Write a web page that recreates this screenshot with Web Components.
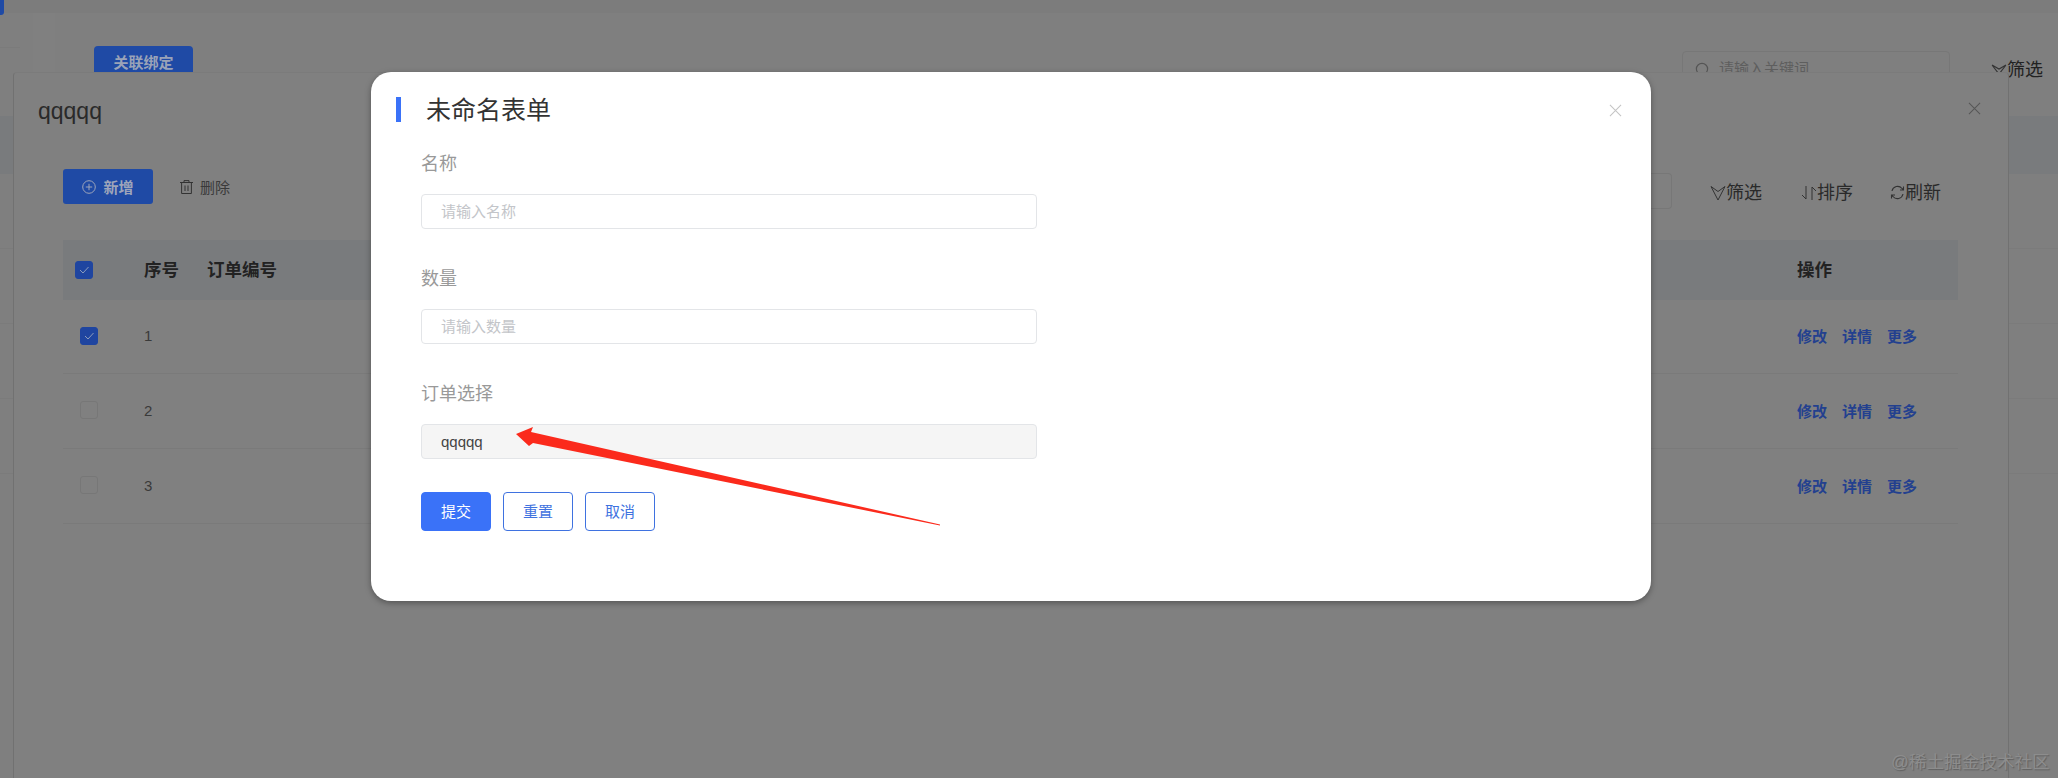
<!DOCTYPE html>
<html lang="zh"><head><meta charset="utf-8"><title>未命名表单</title>
<style>
html,body{margin:0;padding:0;background:#808080}
body{font-family:"Liberation Sans","Noto Sans CJK SC",sans-serif}
</style></head><body>
<x-stage>
  <x-back-page slot="back"></x-back-page>
  <x-drawer slot="drawer" heading="qqqqq">
    <x-data-table></x-data-table>
  </x-drawer>
  <x-modal slot="modal" heading="未命名表单">
    <x-field label="名称" placeholder="请输入名称"></x-field>
    <x-field label="数量" placeholder="请输入数量"></x-field>
    <x-field label="订单选择" value="qqqqq" disabled></x-field>
    <x-actions></x-actions>
  </x-modal>
  <x-arrow slot="overlay"></x-arrow>
  <x-watermark slot="overlay">@稀土掘金技术社区</x-watermark>
</x-stage>
<script>
const FONT='"Liberation Sans","Noto Sans CJK SC",sans-serif';
function def(name,html){
  customElements.define(name,class extends HTMLElement{
    constructor(){super();this.attachShadow({mode:'open'});}
    connectedCallback(){
      this.shadowRoot.innerHTML=typeof html==='function'?html(this):html;
    }
  });
}
const closeIcon=(s,c)=>`<svg width="${s}" height="${s}" viewBox="0 0 14 14" fill="none" stroke="${c}" stroke-width="1.1"><path d="M1 1l12 12M13 1L1 13"/></svg>`;
const check=`<svg width="16" height="16" viewBox="0 0 16 16" fill="none" stroke="#8c9cbc" stroke-width="1"><path d="M4 8l3 3 5.500-6"/></svg>`;
const ops=`<div class="o"><span>修改</span><span>详情</span><span>更多</span></div>`;

def('x-stage',`<style>
:host{display:block;position:relative;width:2058px;height:778px;overflow:hidden;background:#808080;font-family:${FONT}}
</style><slot name="back"></slot><slot name="drawer"></slot><slot name="modal"></slot><slot name="overlay"></slot>`);

def('x-back-page',`<style>
:host{position:absolute;inset:0;display:flex;flex-direction:column;background:#7f7f7f}
.top{height:13px;background:#7c7c7c;flex:none}
.tab{position:absolute;left:0;top:0;width:4px;height:15px;background:#1f4aa5;border-radius:0 0 3px 0}
.side{position:absolute;left:0;top:47px;width:20px;height:1px;background:#7b7b7b}
.strip{position:absolute;left:33px;top:13px;width:22px;height:59px;background:#808080}
.bar{height:103px;flex:none;box-sizing:border-box;padding:33px 15px 0 94px;display:flex;align-items:flex-start;justify-content:space-between;position:relative}
.btn{width:99px;height:40px;background:#1f4aa5;border-radius:4px 4px 0 0;color:#9aa3b8;font-size:15px;font-weight:700;text-align:center;line-height:34px}
.r{display:flex;align-items:flex-start}
.search{width:268px;height:34px;box-sizing:border-box;border:1px solid #777;border-radius:4px;padding:4px 12px;display:flex;gap:10px;color:#5e5e5e;font-size:15px;line-height:26px;overflow:hidden;margin-top:5px}
.search svg{margin-top:6px;flex:none}
.fil{margin-left:41px;margin-top:10px;display:flex;align-items:center;font-size:18px;color:#222;line-height:28px}
.band{height:58px;flex:none;background:#797b7d}
.row{height:75px;flex:none;box-sizing:border-box;border-bottom:1px solid #7b7b7b}
</style>
<span class="strip"></span><span class="tab"></span><span class="side"></span>
<div class="top"></div>
<div class="bar"><div class="btn">关联绑定</div><div class="r"><div class="search"><svg width="14" height="14" viewBox="0 0 14 14" fill="none" stroke="#555" stroke-width="1.2"><circle cx="7" cy="7" r="5.6"/></svg><span>请输入关键词</span></div>
<div class="fil"><svg width="16" height="12" viewBox="0 0 16 12" fill="none" stroke="#333" stroke-width="1.1"><path d="M1 1l7 9 7-9M1 1l7 4 7-4"/></svg>筛选</div></div></div>
<div class="band"></div><div class="row"></div><div class="row"></div><div class="row"></div><div class="row"></div>`);

def('x-drawer',h=>`<style>
:host{position:absolute;left:13px;top:72px;width:1996px;bottom:0;box-sizing:border-box;background:#808080;border-left:1px solid #717171;border-right:1px solid #717171;border-top:1px solid #7b7b7b;border-radius:4px 4px 0 0;display:block;padding:0 50px 0 49px}
header{height:96px;display:flex;justify-content:space-between;margin-left:-25px;margin-right:-23px;box-sizing:border-box}
h2{margin:0;font-size:23px;font-weight:400;color:#2a2a2a;line-height:26px;padding-top:25px}
.x{padding-top:28px}
</style>
<header><h2>${h.getAttribute('heading')}</h2><div class="x">${closeIcon(13,'#565656')}</div></header>
<slot></slot>`);

def('x-data-table',`<style>
:host{display:block;color:#222;font-size:17.5px}
.tools{height:35px;display:flex;align-items:center;margin-bottom:36px}
.add{width:90px;height:35px;box-sizing:border-box;background:#1f4aa5;border-radius:3px;color:#9ea5ba;font-size:15px;font-weight:700;display:flex;align-items:center;justify-content:center;gap:7px}
.del{margin-left:27px;display:flex;align-items:center;gap:7px;font-size:15px;color:#3a3a3a}
.right{margin-left:auto;margin-right:17px;margin-top:12px;display:flex;align-items:center;font-size:18px;color:#2a2a2a}
.q{width:110px;height:36px;box-sizing:border-box;border:1px solid #777;border-left:0;border-radius:0 4px 4px 0;margin-right:38px;margin-top:-4px}
.t{display:flex;align-items:center;gap:0;line-height:26px}
.t+.t{margin-left:37px}
.t:nth-child(3){margin-left:39px}
.g{display:grid;grid-template-columns:81px 63px 1fr 161px;align-items:center;box-sizing:border-box}
.h{height:60px;background:#797b7d;font-weight:700}
.h span{padding-bottom:3px}
.b{height:75px;border-bottom:1px solid #7a7a7a;font-size:15px;color:#3a3a3a;padding-bottom:2px}
.h+.b{height:74px}
.c{display:block;width:18px;height:18px;box-sizing:border-box;border:1px solid #777;border-radius:3px}
.on{background:#1f45a0;border-color:#1f45a0}
.on svg{display:block}
.h .c{margin-left:12px}.b .c{margin-left:17px}
.o{display:flex;gap:15px;color:#23408f;font-weight:700;font-size:15px}
</style>
<div class="tools">
<div class="add"><svg width="14" height="14" viewBox="0 0 14 14" fill="none" stroke="#9ea5ba" stroke-width="1"><circle cx="7" cy="7" r="6.3"/><path d="M7 3.800v6.400M3.800 7h6.400"/></svg>新增</div>
<div class="del"><svg width="13" height="14" viewBox="0 0 13 14" fill="none" stroke="#333" stroke-width="1"><path d="M0 2.500h13M4 2.500V.6h5v1.900M1.600 2.500v11h9.800v-11M5 5.500v5.500M8 5.500v5.500"/></svg>删除</div>
<div class="right"><div class="q"></div>
<div class="t"><svg width="16" height="16" viewBox="0 0 16 16" fill="none" stroke="#333" stroke-width="1"><path d="M1 1.500l7 13.500 7-13.500M1 1.500l7 5 7-5"/></svg>筛选</div>
<div class="t"><svg width="16" height="16" viewBox="0 0 16 16" fill="none" stroke="#333" stroke-width="1"><path d="M5 1v13L1 10M11 15V2l4 4"/></svg>排序</div>
<div class="t"><svg width="15" height="15" viewBox="0 0 15 15" fill="none" stroke="#333" stroke-width="1.100"><path d="M2 6a5.700 5.700 0 0 1 10-2.500L13.500 5M13 9a5.700 5.700 0 0 1-10 2.500L1.500 10M13.500 1.500V5H10M1.500 13.500V10H5"/></svg>刷新</div>
</div></div>
<div class="g h"><i class="c on">${check}</i><span>序号</span><span>订单编号</span><span>操作</span></div>
<div class="g b"><i class="c on">${check}</i><span>1</span><span></span>${ops}</div>
<div class="g b"><i class="c"></i><span>2</span><span></span>${ops}</div>
<div class="g b"><i class="c"></i><span>3</span><span></span>${ops}</div>`);

def('x-modal',h=>`<style>
:host{position:absolute;left:371px;top:72px;width:1280px;height:529px;box-sizing:border-box;background:#fff;border-radius:20px;box-shadow:0 2px 6px rgba(0,0,0,.35);padding:25px 25px 0;display:block}
header{display:flex;align-items:center;height:25px;margin-bottom:27px}
i{display:block;width:5px;height:25px;background:#3a72f8;margin-right:24px}
h2{margin:0;flex:1;font-size:25px;font-weight:400;color:#333;line-height:25px;padding-top:1px;padding-left:1px}
.x{height:13px;margin-top:1px}
.x svg{display:block;margin-right:4px}
main{padding-left:25px}
</style>
<header><i></i><h2>${h.getAttribute('heading')}</h2><div class="x">${closeIcon(13,'#c4c4c4')}</div></header>
<main><slot></slot></main>`);

def('x-field',h=>{const v=h.getAttribute('value'),p=h.getAttribute('placeholder'),d=h.hasAttribute('disabled');return `<style>
:host{display:block;margin-bottom:35px}
label{display:block;height:30px;line-height:30px;font-size:18px;color:#999;margin-bottom:15px}
.i{width:616px;height:35px;box-sizing:border-box;border:1px solid #e3e5e8;border-radius:4px;padding:0 19px;font-size:15px;line-height:33px;background:${d?'#f5f5f5':'#fff'};color:${d?'#444':'#c3c5c9'}}
</style><label>${h.getAttribute('label')}</label><div class="i">${v||p}</div>`});

def('x-actions',`<style>
:host{display:flex;gap:12px;margin-top:-2px}
b{width:70px;height:39px;box-sizing:border-box;border:1px solid #3f72e0;border-radius:4px;font-weight:400;font-size:15px;line-height:37px;text-align:center;color:#3f72e0;background:#fff}
.p{background:#3a72f8;border-color:#3a72f8;color:#fff}
</style><b class="p">提交</b><b>重置</b><b>取消</b>`);

def('x-arrow',`<style>
:host{position:absolute;left:0;top:0;display:block;width:2058px;height:778px;pointer-events:none}
svg{display:block}
</style><svg width="2058" height="778"><polygon fill="#fb2a1c" points="516,434 533,427 531,432 940,524.500 940,525.500 533,443 529,446"/></svg>`);

def('x-watermark',`<style>
:host{position:absolute;left:1891px;top:748px;display:block;font-size:17.6px;line-height:28px;white-space:nowrap;color:#8d8d8d;text-shadow:1px 1px 1px #606060}
</style><slot></slot>`);
</script>
</body></html>
